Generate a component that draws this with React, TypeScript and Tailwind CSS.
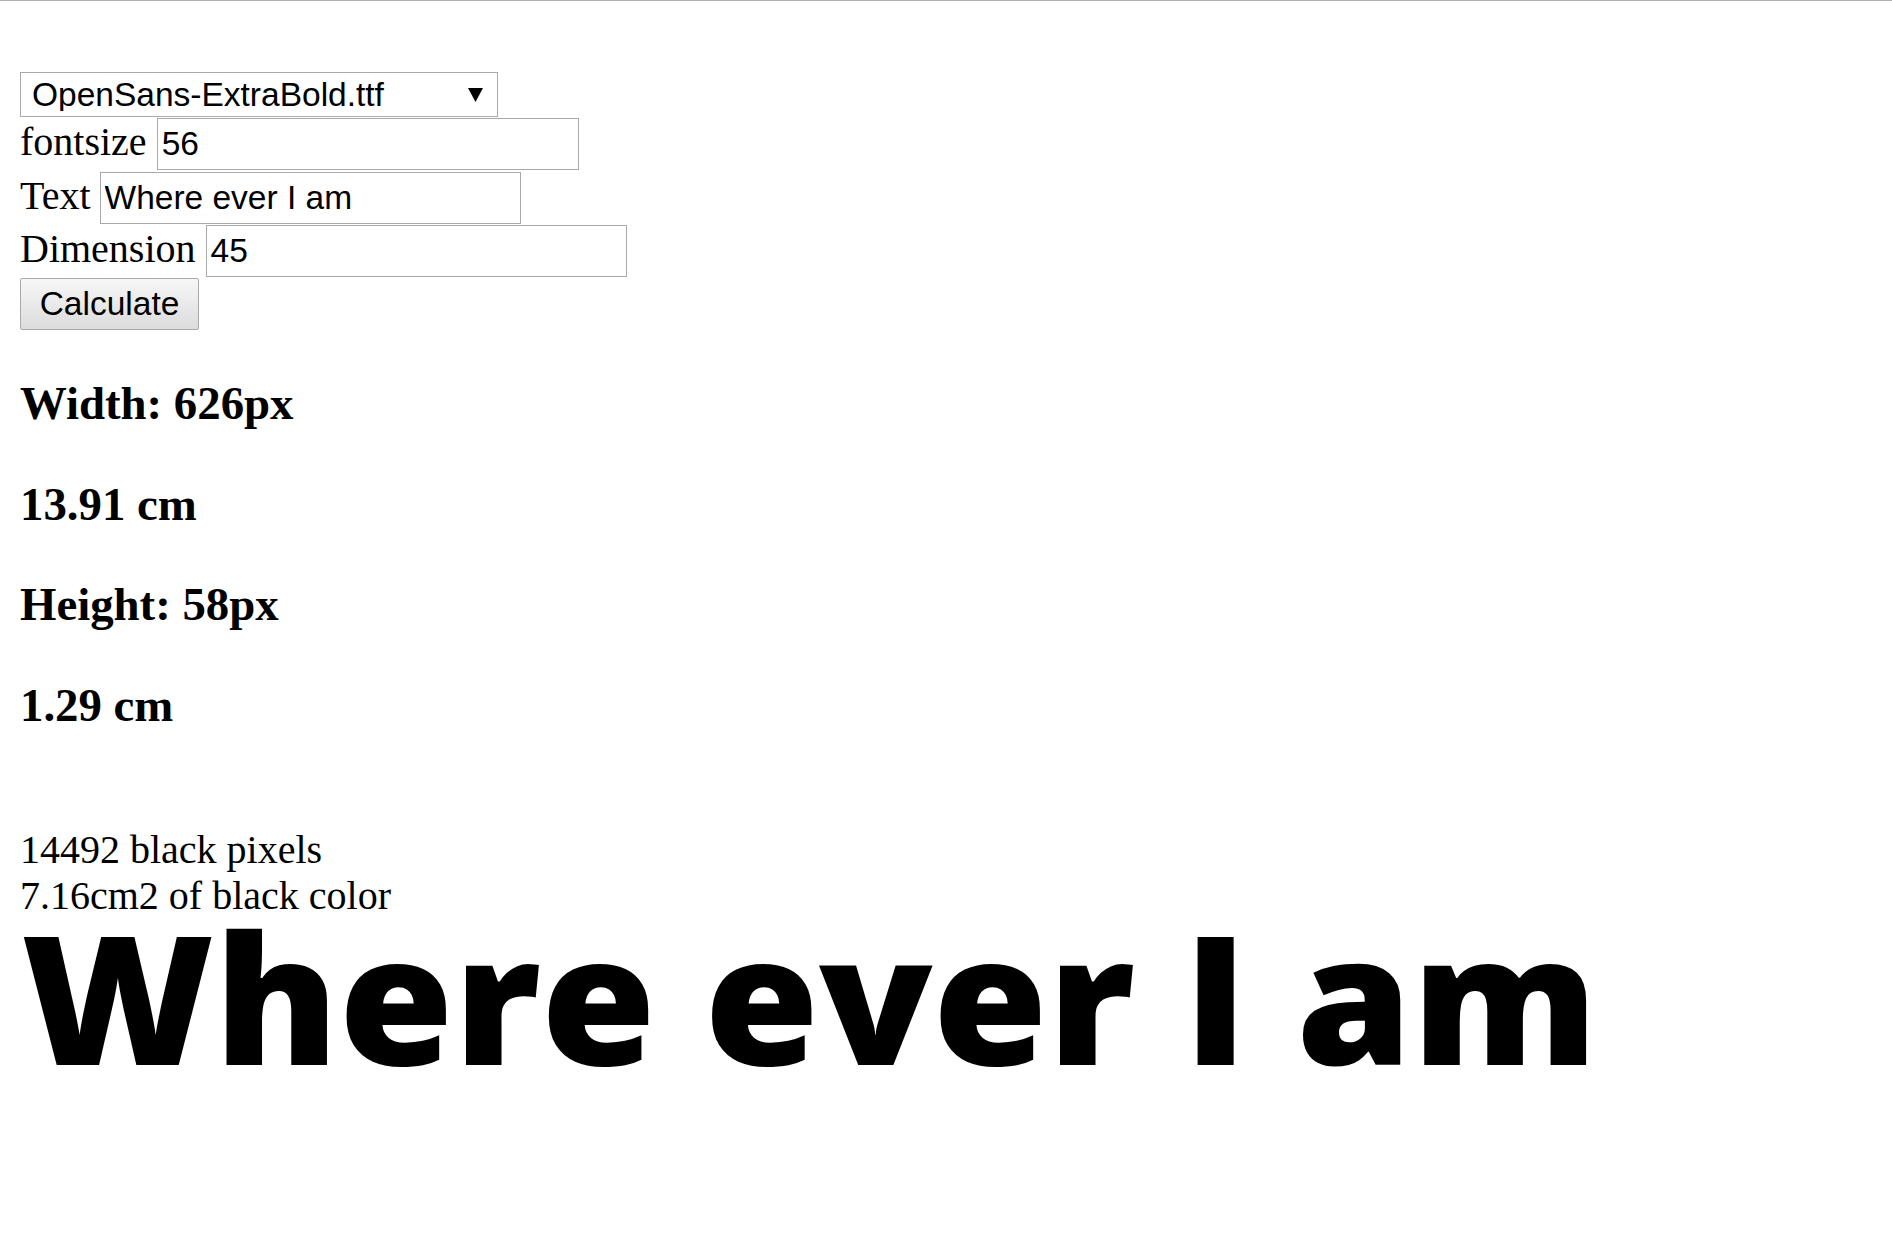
import React from "react";

export default function App() {
  return (
    <div className="min-h-screen bg-white border-t border-[#b0b0b0] text-black font-['Liberation_Serif','Times_New_Roman',serif] text-[40px] leading-[1.15]">
      <div className="pl-[20px] pt-[71px]">
        <div className="flex flex-col items-start gap-[1.3px]">
          <div className="relative flex">
            <select
              defaultValue="OpenSans-ExtraBold.ttf"
              className="block appearance-none w-[478px] h-[45px] border border-[#a9a9a9] bg-white pl-[11px] pr-[40px] font-['Liberation_Sans',Arial,sans-serif] text-[33.5px] leading-none text-black outline-none rounded-none"
            >
              <option>OpenSans-ExtraBold.ttf</option>
              <option>OpenSans-Bold.ttf</option>
              <option>OpenSans-Regular.ttf</option>
            </select>
            <svg
              className="absolute left-[448px] top-[15px] pointer-events-none"
              width="15"
              height="15"
              viewBox="0 0 15 15"
            >
              <polygon points="0,1 15,1 7.5,15" fill="#000" />
            </svg>
          </div>
          <div className="flex items-baseline">
            <span>fontsize</span>
            <input
              defaultValue="56"
              className="ml-[10px] w-[422px] h-[52px] border border-[#a9a9a9] bg-white pl-[4px] font-['Liberation_Sans',Arial,sans-serif] text-[33.5px] text-black outline-none"
            />
          </div>
          <div className="flex items-baseline">
            <span>Text</span>
            <input
              defaultValue="Where ever I am"
              className="ml-[9px] w-[421px] h-[52px] border border-[#a9a9a9] bg-white pl-[4px] font-['Liberation_Sans',Arial,sans-serif] text-[33.5px] text-black outline-none"
            />
          </div>
          <div className="flex items-baseline">
            <span>Dimension</span>
            <input
              defaultValue="45"
              className="ml-[10px] w-[421px] h-[52px] border border-[#a9a9a9] bg-white pl-[4px] font-['Liberation_Sans',Arial,sans-serif] text-[33.5px] text-black outline-none"
            />
          </div>
          <button className="w-[179px] h-[52px] border border-[#a9a9a9] rounded-[2px] bg-gradient-to-b from-[#f7f7f7] to-[#dcdcdc] font-['Liberation_Sans',Arial,sans-serif] text-[33.5px] text-black leading-none">
            Calculate
          </button>
        </div>

        <div>
          <h3 className="my-[46.8px] text-[46.8px] font-bold leading-[1.15]">Width: 626px</h3>
          <h3 className="my-[46.8px] text-[46.8px] font-bold leading-[1.15]">13.91 cm</h3>
          <h3 className="my-[46.8px] text-[46.8px] font-bold leading-[1.15]">Height: 58px</h3>
          <h3 className="my-[46.8px] text-[46.8px] font-bold leading-[1.15]">1.29 cm</h3>
        </div>

        <div className="h-[48px]" />
        <div>14492 black pixels</div>
        <div>7.16cm2 of black color</div>

        <svg width="1600" height="175" viewBox="0 0 1600 175" className="block">
          <text
            x="1"
            y="146"
            fontSize="180"
            textLength="1577"
            lengthAdjust="spacingAndGlyphs"
            className="font-['Open_Sans',sans-serif] font-extrabold"
            fill="#000"
          >
            Where ever I am
          </text>
        </svg>
      </div>
    </div>
  );
}
